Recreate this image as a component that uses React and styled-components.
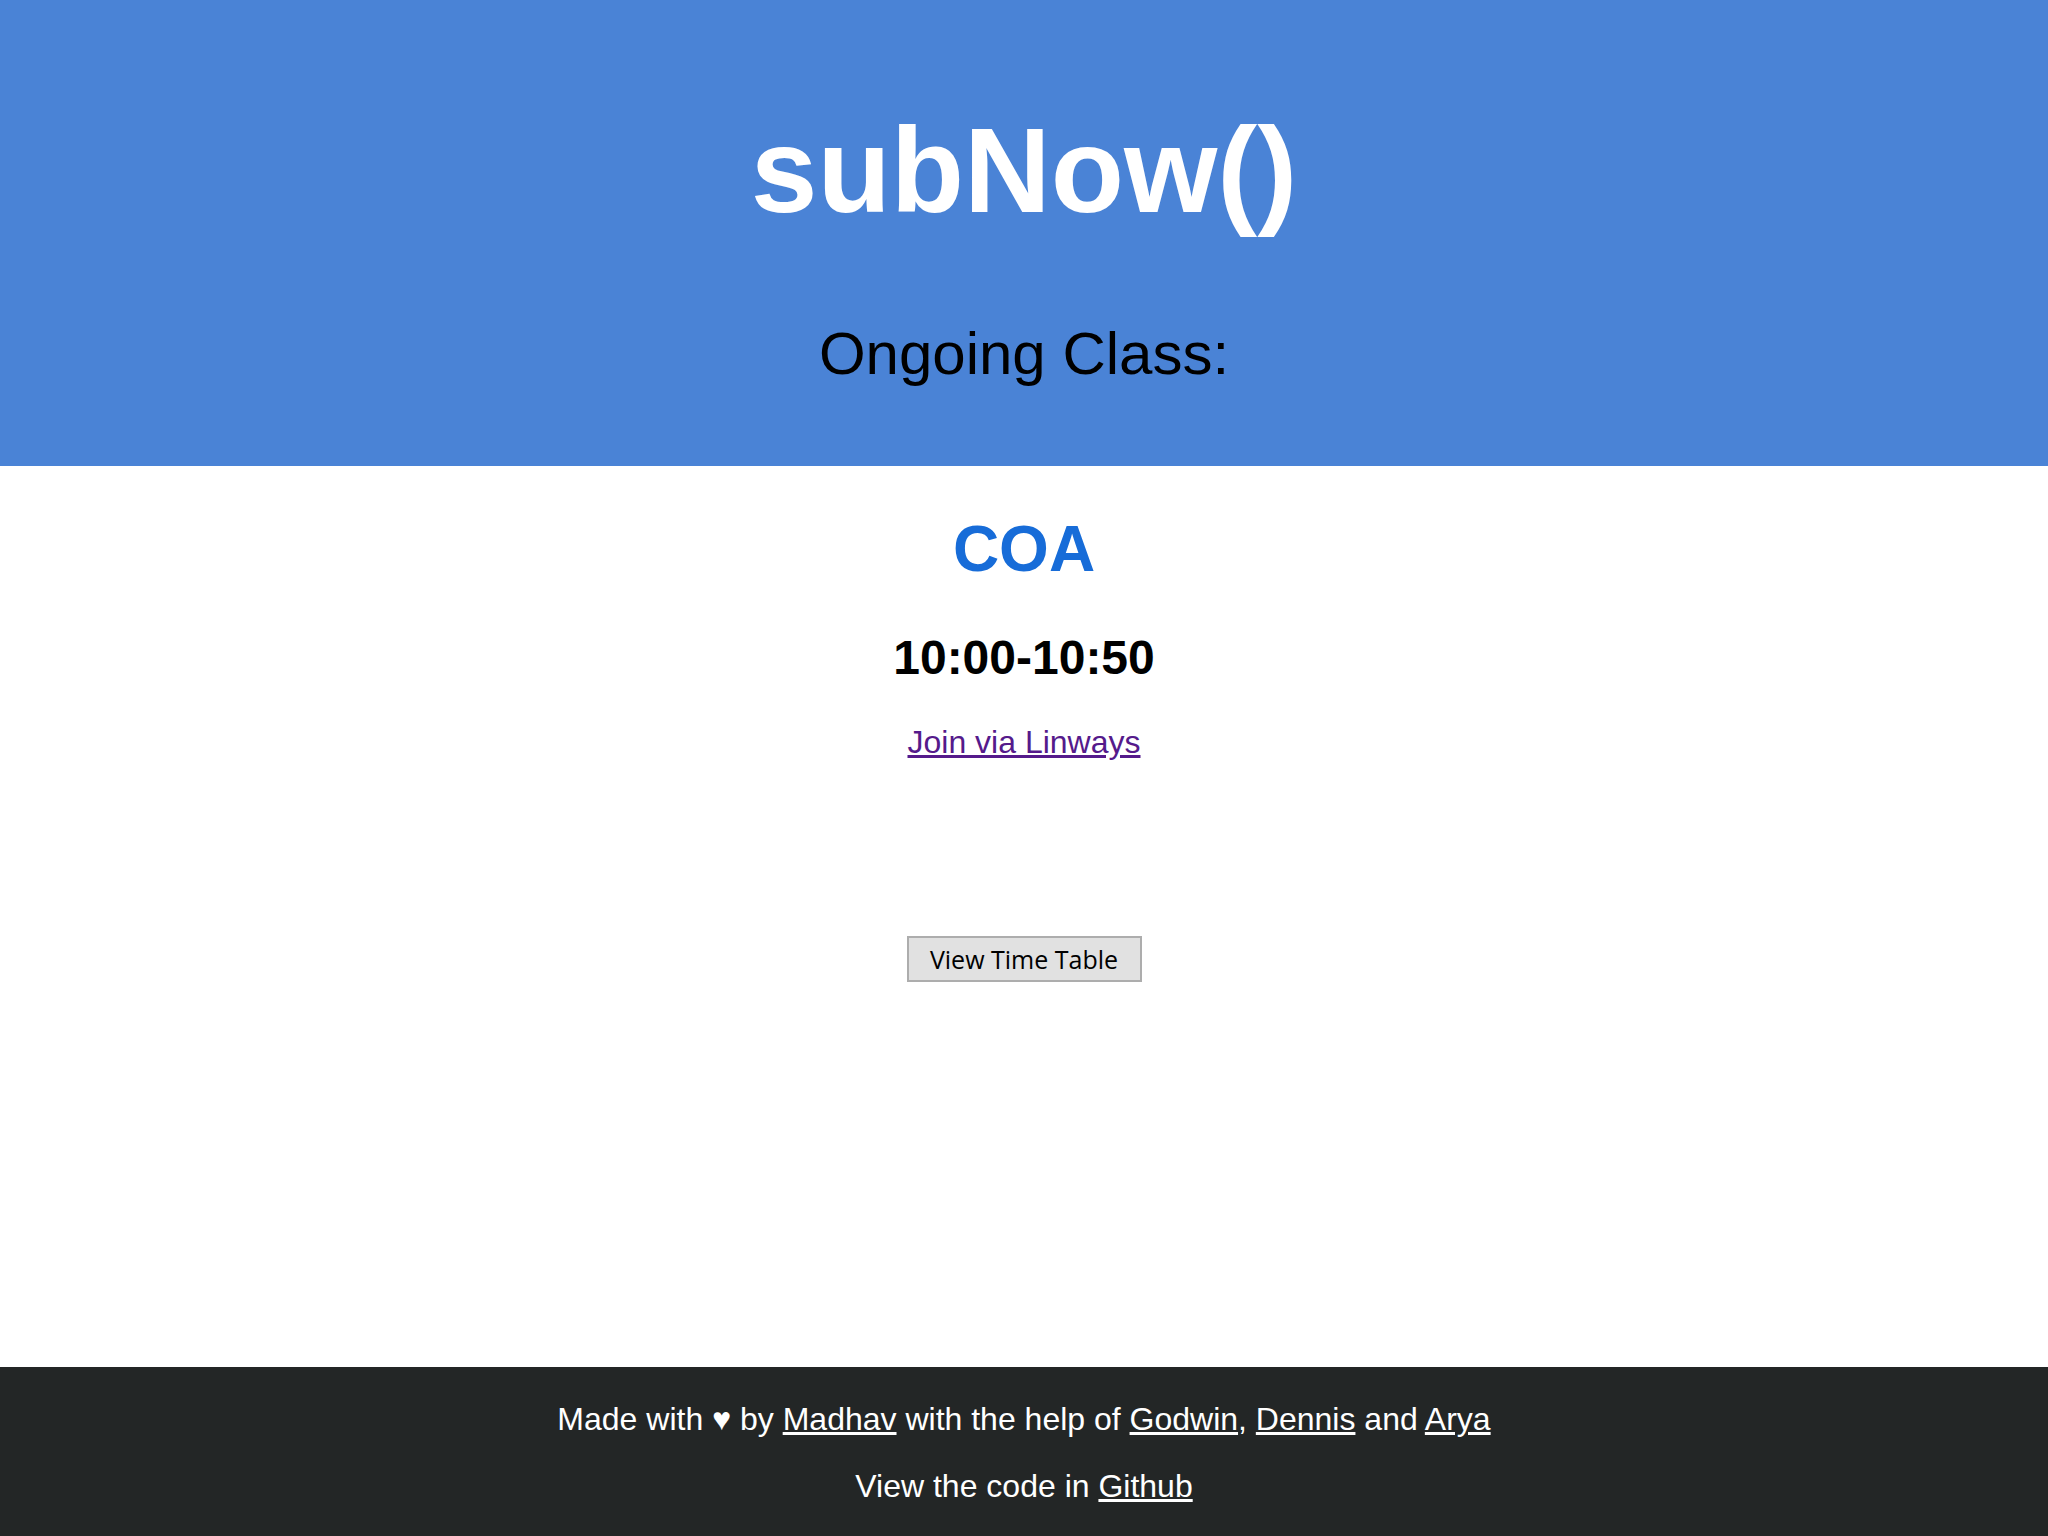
import React from "react";
import styled, { createGlobalStyle } from "styled-components";

const GlobalStyle = createGlobalStyle`
  html, body {
    margin: 0;
    padding: 0;
  }
  body {
    font-family: "Liberation Sans", Arial, sans-serif;
    background: #fff;
  }
`;

const Page = styled.div`
  display: flex;
  flex-direction: column;
  min-height: 100vh;
`;

const Header = styled.header`
  display: flex;
  flex-direction: column;
  align-items: center;
  background: #4a83d6;
  padding: 101px 0 78px;
`;

const Title = styled.h1`
  margin: 0;
  font-size: 120px;
  line-height: 138px;
  font-weight: bold;
  color: #fff;
`;

const Subtitle = styled.h2`
  margin: 80px 0 0;
  font-size: 60px;
  line-height: 69px;
  font-weight: normal;
  color: #000;
`;

const Main = styled.main`
  flex: 1;
  display: flex;
  flex-direction: column;
  align-items: center;
  padding-top: 46px;
`;

const Subject = styled.h2`
  margin: 0;
  font-size: 64px;
  line-height: 74px;
  font-weight: bold;
  color: #176cd8;
`;

const Time = styled.h3`
  margin: 44px 0 0;
  font-size: 48px;
  line-height: 55px;
  font-weight: bold;
  color: #000;
`;

const JoinLink = styled.a`
  margin-top: 39px;
  font-size: 32px;
  line-height: 36px;
  color: #551a8b;
  text-decoration: underline;
`;

const Button = styled.button`
  margin-top: 176px;
  width: 235px;
  height: 46px;
  padding: 0;
  background: #e1e1e1;
  border: 2px solid #adadad;
  font-family: "Open Sans", "Noto Sans", sans-serif;
  font-size: 25px;
  color: #000;
  cursor: pointer;
`;

const Footer = styled.footer`
  display: flex;
  flex-direction: column;
  align-items: center;
  gap: 30px;
  background: #232626;
  padding: 34px 0 31px;
`;

const FooterLine = styled.p`
  margin: 0;
  font-size: 32px;
  line-height: 37px;
  color: #fff;
`;

const FooterLink = styled.a`
  color: #fff;
  text-decoration: underline;
`;

export default function App() {
  return (
    <Page>
      <GlobalStyle />
      <Header>
        <Title>subNow()</Title>
        <Subtitle>Ongoing Class:</Subtitle>
      </Header>
      <Main>
        <Subject>COA</Subject>
        <Time>10:00-10:50</Time>
        <JoinLink href="#">Join via Linways</JoinLink>
        <Button>View Time Table</Button>
      </Main>
      <Footer>
        <FooterLine>
          Made with ♥ by <FooterLink href="#">Madhav</FooterLink> with the help of{" "}
          <FooterLink href="#">Godwin</FooterLink>, <FooterLink href="#">Dennis</FooterLink> and{" "}
          <FooterLink href="#">Arya</FooterLink>
        </FooterLine>
        <FooterLine>
          View the code in <FooterLink href="#">Github</FooterLink>
        </FooterLine>
      </Footer>
    </Page>
  );
}
